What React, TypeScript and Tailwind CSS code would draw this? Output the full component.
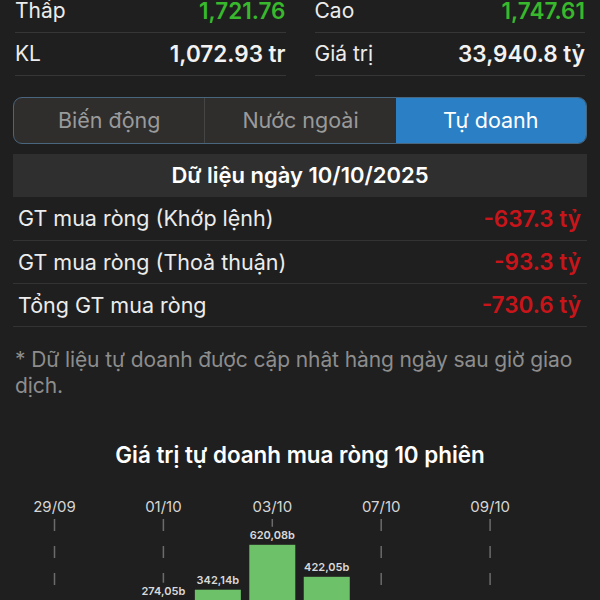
import React from 'react';

const stats = [
  [
    { label: 'Thấp', value: '1,721.76', green: true },
    { label: 'Cao', value: '1,747.61', green: true },
  ],
  [
    { label: 'KL', value: '1,072.93 tr', green: false },
    { label: 'Giá trị', value: '33,940.8 tỷ', green: false },
  ],
];

const tabs = ['Biến động', 'Nước ngoài', 'Tự doanh'];

const netRows = [
  { label: 'GT mua ròng (Khớp lệnh)', value: '-637.3 tỷ', h: 'h-[44px]' },
  { label: 'GT mua ròng (Thoả thuận)', value: '-93.3 tỷ', h: 'h-[43px]' },
  { label: 'Tổng GT mua ròng', value: '-730.6 tỷ', h: 'h-[43px]' },
];

// 10 sessions, value in billions (negatives fall below the visible area)
const sessions = [
  { date: '29/09', value: -310.2 },
  { date: '30/09', value: -120.5 },
  { date: '01/10', value: 274.05 },
  { date: '02/10', value: 342.14 },
  { date: '03/10', value: 620.08 },
  { date: '06/10', value: 422.05 },
  { date: '07/10', value: -185.4 },
  { date: '08/10', value: -96.7 },
  { date: '09/10', value: -250.3 },
  { date: '10/10', value: -730.6 },
];

function NetChart() {
  const x0 = 54.5;
  const pitch = 54.45;
  const zeroY = 177;
  const scale = 0.1616;
  const barW = 46;

  return (
    <svg width={600} height={132} className="block">
      {sessions.map((s, i) => {
        const cx = x0 + i * pitch;
        const showDate = i % 2 === 0;
        const top = zeroY - Math.max(s.value, 0) * scale;
        const labelY = top - 10;
        const dashEnd = s.value > 0 ? labelY - 8 : 140;
        return (
          <g key={s.date}>
            {showDate && (
              <>
                <text
                  x={cx}
                  y={44}
                  textAnchor="middle"
                  fill="#d6d6d6"
                  fontSize={15}
                  fontFamily="Inter, sans-serif"
                >
                  {s.date}
                </text>
                <line
                  x1={cx}
                  x2={cx}
                  y1={51}
                  y2={dashEnd}
                  stroke="#6b6b6b"
                  strokeWidth={1.5}
                  strokeDasharray="12 15"
                />
              </>
            )}
            {s.value > 0 && (
              <>
                <rect x={cx - barW / 2} y={top} width={barW} height={zeroY - top} fill="#6dc168" />
                <text
                  x={cx}
                  y={labelY + 4}
                  textAnchor="middle"
                  fill="#d9d9d9"
                  fontSize={11}
                  fontWeight={600}
                  fontFamily="Inter, sans-serif"
                >
                  {s.value.toFixed(2).replace('.', ',')}b
                </text>
              </>
            )}
          </g>
        );
      })}
    </svg>
  );
}

export default function App() {
  return (
    <div className="w-[600px] h-[600px] overflow-hidden bg-[#1f1f1f] text-white font-['Inter',sans-serif]">
      <div className="-mt-[10px] px-[15px] grid grid-cols-2 gap-x-[29px]">
        {stats.map((row, r) =>
          row.map((cell) => (
            <div
              key={cell.label + r}
              className="h-[43px] flex items-center justify-between border-b border-[#363636]"
            >
              <span className="text-[21px] text-[#ececec]">{cell.label}</span>
              <span
                className={
                  cell.green
                    ? 'text-[22.5px] font-semibold text-[#38b82c]'
                    : 'text-[22.5px] font-semibold text-[#f2f2f2]'
                }
              >
                {cell.value}
              </span>
            </div>
          ))
        )}
      </div>

      <div className="mt-[21px] mx-[13px] h-[47px] flex rounded-[9px] border border-[#49667e] overflow-hidden bg-[#2f2e2d]">
        {tabs.map((t, i) => (
          <div
            key={t}
            className={
              i === 2
                ? 'flex-1 flex items-center justify-center bg-[#2b80c5] text-[21.5px] text-white'
                : i === 0
                ? 'flex-1 flex items-center justify-center text-[21.5px] text-[#9a9a9a] border-r border-[#454545]'
                : 'flex-1 flex items-center justify-center text-[21.5px] text-[#9a9a9a]'
            }
          >
            {t}
          </div>
        ))}
      </div>

      <div className="mt-[10px] mx-[13px] h-[43px] bg-[#2f2f2f] flex items-center justify-center text-[22px] font-semibold text-white">
        Dữ liệu ngày 10/10/2025
      </div>

      <div className="mx-[13px]">
        {netRows.map((r) => (
          <div
            key={r.label}
            className={`${r.h} flex items-center justify-between pl-[5px] pr-[6px] border-b border-[#333333]`}
          >
            <span className="text-[21.5px] text-[#ececec]">{r.label}</span>
            <span className="text-[22.5px] font-semibold text-[#c9141a]">{r.value}</span>
          </div>
        ))}
      </div>

      <p className="mt-[20px] pl-[15px] pr-[8px] text-[21px] tracking-[-0.1px] leading-[26px] text-[#8d8d8d]">
        * Dữ liệu tự doanh được cập nhật hàng ngày sau giờ giao dịch.
      </p>

      <div className="mt-[43px] text-center text-[22.4px] leading-[26px] font-semibold text-white">
        Giá trị tự doanh mua ròng 10 phiên
      </div>

      <NetChart />
    </div>
  );
}
